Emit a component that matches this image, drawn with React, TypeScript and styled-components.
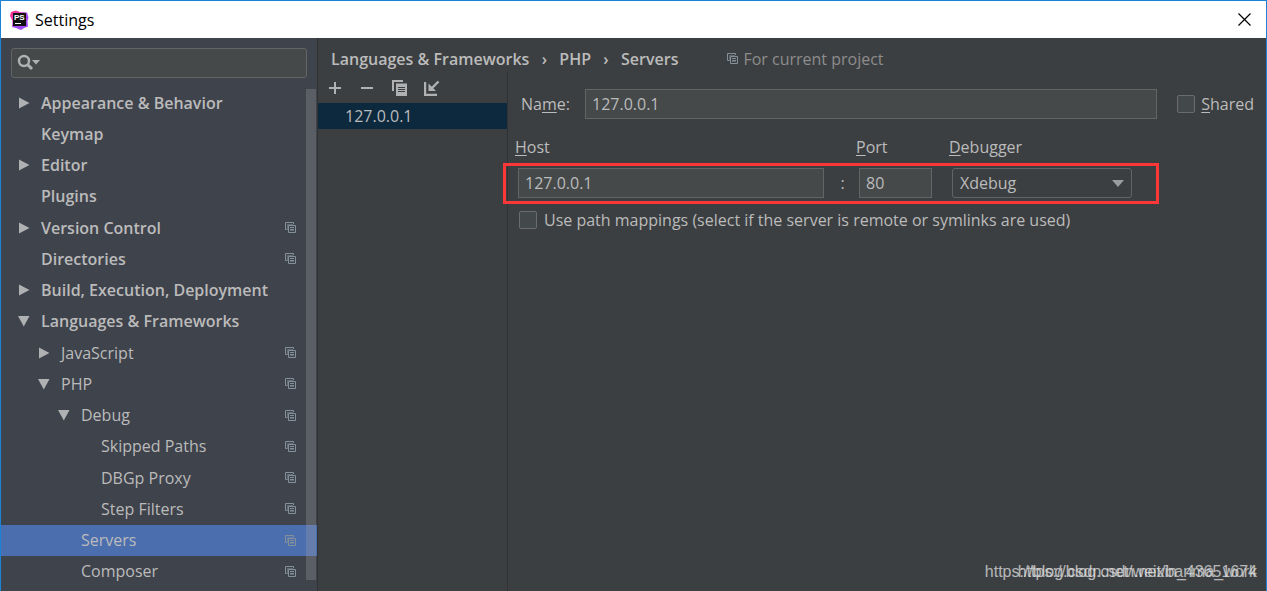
import React from 'react';
import styled, { createGlobalStyle } from 'styled-components';

const GlobalStyle = createGlobalStyle`
  *, *::before, *::after { box-sizing: border-box; }
  html, body { margin: 0; background: #3c3f41; }
  body, input, button, select {
    font-family: "Open Sans", "Noto Sans", sans-serif;
    font-size: 16px;
    line-height: 20px;
    color: #bbbbbb;
  }
`;

const Window = styled.div`
  position: relative;
  display: flex;
  flex-direction: column;
  min-height: 100vh;
  border: 1px solid #1883d7;
  border-bottom: 0;
  background: #3c3f41;
`;

const TitleBar = styled.header`
  display: flex;
  align-items: center;
  gap: 6px;
  height: 37px;
  padding: 0 15px 0 8px;
  background: #ffffff;
  color: #000000;
`;

const Title = styled.h1`
  flex: 1;
  margin: 0;
  font-size: 16px;
  font-weight: 400;
`;

const IconButton = styled.button`
  display: flex;
  align-items: center;
  justify-content: center;
  padding: 0;
  border: 0;
  background: none;
  color: inherit;
`;

const Body = styled.div`
  display: flex;
  flex: 1;
`;

const Sidebar = styled.nav`
  flex: none;
  width: 316px;
  padding-top: 10px;
  background: #3f434c;
`;

const SearchBox = styled.label`
  display: flex;
  align-items: center;
  gap: 4px;
  height: 30px;
  margin: 0 10px;
  padding: 0 5px;
  border: 1px solid #646464;
  border-radius: 3px;
  background: #45494a;
`;

const SearchInput = styled.input`
  flex: 1;
  min-width: 0;
  border: 0;
  outline: 0;
  background: none;
`;

const TreeArea = styled.div`
  position: relative;
  margin-top: 9px;
`;

const Tree = styled.ul`
  display: grid;
  grid-auto-rows: 1fr;
  height: 500px;
  margin: 0;
  padding: 0;
  list-style: none;
`;

const TreeRow = styled.li<{ $level: number; $selected?: boolean }>`
  display: flex;
  align-items: center;
  padding: 0 21px 0 ${(p) => 16 + p.$level * 20}px;
  background: ${(p) => (p.$selected ? '#4b6eaf' : 'transparent')};
  font-weight: ${(p) => (p.$level === 0 ? 600 : 400)};
`;

const ArrowSlot = styled.span`
  display: flex;
  flex: none;
  width: 24px;
`;

const TreeLabel = styled.span`
  flex: 1;
  white-space: nowrap;
`;

const ScrollThumb = styled.div`
  position: absolute;
  top: 2px;
  right: 1px;
  bottom: 7px;
  width: 10px;
  background: rgba(166, 166, 166, 0.28);
`;

const Main = styled.main`
  display: flex;
  flex: 1;
  flex-direction: column;
  min-width: 0;
  border-left: 1px solid #323232;
`;

const Breadcrumb = styled.div`
  display: flex;
  align-items: center;
  height: 34px;
  padding: 7px 13px 0;
  font-weight: 600;
`;

const Separator = styled.span`
  width: 30px;
  text-align: center;
`;

const ProjectNote = styled.span`
  display: flex;
  align-items: center;
  gap: 5px;
  margin-left: 49px;
  color: #8c8c8c;
  font-weight: 400;
`;

const Columns = styled.div`
  display: flex;
  flex: 1;
`;

const ServerPane = styled.section`
  flex: none;
  width: 190px;
  border-right: 1px solid #323232;
`;

const Toolbar = styled.div`
  display: flex;
  align-items: center;
  gap: 16px;
  height: 31px;
  padding-left: 9px;
  color: #afb1b3;
`;

const ServerItem = styled.div`
  height: 26px;
  padding: 3px 27px;
  background: #0d293e;
`;

const Form = styled.form`
  flex: 1;
  min-width: 0;
  padding-top: 17px;
`;

const NameRow = styled.div`
  display: flex;
  align-items: center;
  padding: 0 12px 0 13px;
`;

const NameLabel = styled.label`
  flex: none;
  width: 64px;
`;

const TextInput = styled.input`
  width: 100%;
  min-width: 0;
  height: 30px;
  padding: 0 6px;
  border: 1px solid #646464;
  border-radius: 0;
  outline: 0;
  background: #45494a;
`;

const CheckLabel = styled.label`
  display: flex;
  align-items: center;
  gap: 7px;
  white-space: nowrap;
`;

const SharedLabel = styled(CheckLabel)`
  gap: 6px;
  margin-left: 20px;
`;

const CheckBox = styled.input`
  appearance: none;
  flex: none;
  width: 18px;
  height: 18px;
  margin: 0;
  border: 1px solid #6b6b6b;
  border-radius: 2px;
  background: #43494a;
`;

const Mnemonic = styled.u`
  text-decoration: underline;
  text-underline-offset: 2px;
`;

const FieldGrid = styled.div`
  display: grid;
  grid-template-columns: minmax(0, 1fr) 35px 73px 20px 180px;
  align-items: center;
`;

const LabelRow = styled(FieldGrid)`
  padding: 0 137px 0 7px;
  margin-top: 18px;
`;

const InputRow = styled(FieldGrid)`
  position: relative;
  padding: 0 134px 0 10px;
  margin-top: 11px;
`;

const Highlight = styled.div`
  position: absolute;
  inset: -5px 107px -6px -5px;
  border: 3px solid #fb3737;
  pointer-events: none;
`;

const Colon = styled.span`
  padding-left: 2px;
  text-align: center;
`;

const SelectWrap = styled.div`
  display: grid;
  align-items: center;
  grid-column: 5;

  > * { grid-area: 1 / 1; }
  > svg { justify-self: end; margin-right: 8px; pointer-events: none; }
`;

const Select = styled.select`
  appearance: none;
  width: 100%;
  height: 30px;
  padding: 0 7px;
  border: 1px solid #646464;
  border-radius: 3px;
  background: #3c3f41;
`;

const MappingLabel = styled(CheckLabel)`
  margin: 12px 0 0 11px;
`;

const Watermark = styled.div`
  position: absolute;
  right: 9px;
  bottom: 9px;
  display: grid;
  justify-items: end;
  color: rgba(225, 225, 225, 0.75);
  font-family: "Liberation Sans", sans-serif;
  font-size: 16px;
  line-height: 20px;

  > span { grid-area: 1 / 1; }
`;

const LogoIcon = () => (
  <svg width="20" height="20" viewBox="0 0 20 20" aria-hidden="true">
    <defs>
      <linearGradient id="logo" x1="0" y1="0" x2="1" y2="1">
        <stop offset="0" stopColor="#ff2d7e" />
        <stop offset="0.3" stopColor="#f03bb0" />
        <stop offset="0.5" stopColor="#a846f5" />
        <stop offset="1" stopColor="#9a4df5" />
      </linearGradient>
    </defs>
    <path d="M2 2L7 .5l4 1.500 7 .5 1.500 5-1 4 .5 5-4 1.500-3 2-5-2-4-1 .5-6L1 6z" fill="url(#logo)" />
    <rect x="4" y="3" width="13" height="13" fill="#111" />
    <text x="5" y="10" fill="#fff" fontFamily="Liberation Sans, sans-serif" fontSize="8" fontWeight="700">PS</text>
    <path d="M6 13.500h6" stroke="#fff" />
  </svg>
);

const CloseIcon = () => (
  <svg width="13" height="13" viewBox="0 0 13 13" aria-hidden="true">
    <path d="M.5.5l12 12M12.500.5l-12 12" stroke="#000" strokeWidth="1.200" />
  </svg>
);

const SearchIcon = () => (
  <svg width="24" height="18" viewBox="0 0 24 18" aria-hidden="true">
    <circle cx="7" cy="7" r="5" fill="none" stroke="#afb1b3" strokeWidth="2.400" />
    <path d="M10.500 10.500L15 15" stroke="#afb1b3" strokeWidth="3" />
    <path d="M15 6h8l-4 4.500z" fill="#afb1b3" />
  </svg>
);

const Arrow = ({ open }: { open: boolean }) => (
  <svg width="13" height="12" viewBox="0 0 13 12" aria-hidden="true">
    <path d={open ? 'M1 1h11.500L6.800 11.500z' : 'M2 .5v11L12.500 6z'} fill="#afb1b3" />
  </svg>
);

const ProjectIcon = () => (
  <svg width="11" height="11" viewBox="0 0 11 11" fill="none" stroke="#84909a" aria-hidden="true">
    <path d="M8.500 2V.5h-8v7H2" />
    <path d="M2.500 8V2.500H8" strokeOpacity="0.55" />
    <path d="M10.500 3.500h-7v7h7zM5 5.500h4M5 7.500h4" />
    <path d="M5 8.500h4" strokeOpacity="0.5" />
  </svg>
);

const AddIcon = () => (
  <svg width="16" height="16" viewBox="0 0 16 16" aria-hidden="true">
    <path d="M8 2v12M2 8h12" stroke="currentColor" strokeWidth="2" />
  </svg>
);

const RemoveIcon = () => (
  <svg width="16" height="16" viewBox="0 0 16 16" aria-hidden="true">
    <path d="M2 8h12" stroke="currentColor" strokeWidth="2" />
  </svg>
);

const CopyIcon = () => (
  <svg width="17" height="18" viewBox="0 0 17 18" aria-hidden="true">
    <path d="M12 2H2v10" fill="none" stroke="currentColor" strokeWidth="2" />
    <path d="M5 4.500h11V17H5z" fill="currentColor" />
    <path d="M7 8.500h7M7 10.500h7M7 12.500h7" stroke="#3c3f41" />
  </svg>
);

const ImportIcon = () => (
  <svg width="16" height="16" viewBox="0 0 16 16" aria-hidden="true">
    <path d="M1 2v13H13M14.500 1.500L6 10" fill="none" stroke="currentColor" strokeWidth="2.400" />
    <path d="M4.500 3.500V11H12z" fill="currentColor" />
  </svg>
);

type Node = { label: string; level: number; arrow?: 'open' | 'closed'; project?: boolean; selected?: boolean };

const nodes: Node[] = [
  { label: 'Appearance & Behavior', level: 0, arrow: 'closed' },
  { label: 'Keymap', level: 0 },
  { label: 'Editor', level: 0, arrow: 'closed' },
  { label: 'Plugins', level: 0 },
  { label: 'Version Control', level: 0, arrow: 'closed', project: true },
  { label: 'Directories', level: 0, project: true },
  { label: 'Build, Execution, Deployment', level: 0, arrow: 'closed' },
  { label: 'Languages & Frameworks', level: 0, arrow: 'open' },
  { label: 'JavaScript', level: 1, arrow: 'closed', project: true },
  { label: 'PHP', level: 1, arrow: 'open', project: true },
  { label: 'Debug', level: 2, arrow: 'open', project: true },
  { label: 'Skipped Paths', level: 3, project: true },
  { label: 'DBGp Proxy', level: 3, project: true },
  { label: 'Step Filters', level: 3, project: true },
  { label: 'Servers', level: 2, project: true, selected: true },
  { label: 'Composer', level: 2, project: true },
];

export default function App() {
  return (
    <Window>
      <GlobalStyle />
      <TitleBar>
        <LogoIcon />
        <Title>Settings</Title>
        <IconButton aria-label="Close"><CloseIcon /></IconButton>
      </TitleBar>
      <Body>
        <Sidebar>
          <SearchBox>
            <SearchIcon />
            <SearchInput type="text" aria-label="Search settings" />
          </SearchBox>
          <TreeArea>
            <Tree>
              {nodes.map((n) => (
                <TreeRow key={n.label} $level={n.level} $selected={n.selected}>
                  <ArrowSlot>{n.arrow && <Arrow open={n.arrow === 'open'} />}</ArrowSlot>
                  <TreeLabel>{n.label}</TreeLabel>
                  {n.project && <ProjectIcon />}
                </TreeRow>
              ))}
            </Tree>
            <ScrollThumb />
          </TreeArea>
        </Sidebar>
        <Main>
          <Breadcrumb>
            <span>Languages &amp; Frameworks</span>
            <Separator>›</Separator>
            <span>PHP</span>
            <Separator>›</Separator>
            <span>Servers</span>
            <ProjectNote><ProjectIcon />For current project</ProjectNote>
          </Breadcrumb>
          <Columns>
            <ServerPane>
              <Toolbar>
                <IconButton aria-label="Add"><AddIcon /></IconButton>
                <IconButton aria-label="Remove"><RemoveIcon /></IconButton>
                <IconButton aria-label="Copy"><CopyIcon /></IconButton>
                <IconButton aria-label="Import"><ImportIcon /></IconButton>
              </Toolbar>
              <ServerItem>127.0.0.1</ServerItem>
            </ServerPane>
            <Form>
              <NameRow>
                <NameLabel htmlFor="name">Na<Mnemonic>m</Mnemonic>e:</NameLabel>
                <TextInput id="name" type="text" defaultValue="127.0.0.1" />
                <SharedLabel><CheckBox type="checkbox" /><span><Mnemonic>S</Mnemonic>hared</span></SharedLabel>
              </NameRow>
              <LabelRow>
                <label htmlFor="host"><Mnemonic>H</Mnemonic>ost</label>
                <span />
                <label htmlFor="port"><Mnemonic>P</Mnemonic>ort</label>
                <span />
                <label htmlFor="debugger"><Mnemonic>D</Mnemonic>ebugger</label>
              </LabelRow>
              <InputRow>
                <TextInput id="host" type="text" defaultValue="127.0.0.1" />
                <Colon>:</Colon>
                <TextInput id="port" type="text" defaultValue="80" />
                <SelectWrap>
                  <Select id="debugger" defaultValue="Xdebug">
                    <option>Xdebug</option>
                    <option>Zend Debugger</option>
                  </Select>
                  <svg width="12" height="7" viewBox="0 0 12 7" aria-hidden="true">
                    <path d="M0 0h12L6 7z" fill="#9a9da0" />
                  </svg>
                </SelectWrap>
                <Highlight />
              </InputRow>
              <MappingLabel>
                <CheckBox type="checkbox" />
                <span>Use path mappings (select if the server is remote or symlinks are used)</span>
              </MappingLabel>
            </Form>
          </Columns>
        </Main>
      </Body>
      <Watermark>
        <span>https://blog.csdn.net/weixin_43651674</span>
        <span>https://blog.csdn.net/banma_work</span>
      </Watermark>
    </Window>
  );
}
